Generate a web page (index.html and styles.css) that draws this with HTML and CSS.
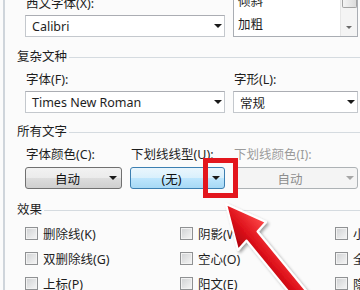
FILE: index.html
```html
<!DOCTYPE html>
<html lang="zh-CN">
<head>
  <meta charset="UTF-8">
  <title>字体</title>
  <link rel="stylesheet" href="styles.css">
</head>
<body>
  <div class="frame">
    <div class="section grid2 top">
      <div class="col">
        <div class="label">西文字体(X):</div>
        <div class="combo"><span>Calibri</span><span class="caret"></span></div>
      </div>
      <div class="listbox">
        <div class="list-items">
          <div class="list-item">倾斜</div>
          <div class="list-item">加粗</div>
        </div>
        <div class="scrollbar">
          <div class="scroll-thumb"></div>
          <div class="scroll-down"><span class="caret small"></span></div>
        </div>
      </div>
    </div>

    <div class="group-title g1"><span>复杂文种</span></div>
    <div class="section grid2 gap-label">
      <div class="col">
        <div class="label">字体(F):</div>
        <div class="combo"><span>Times New Roman</span><span class="caret"></span></div>
      </div>
      <div class="col">
        <div class="label">字形(L):</div>
        <div class="combo"><span>常规</span><span class="caret"></span></div>
      </div>
    </div>

    <div class="group-title g2"><span>所有文字</span></div>
    <div class="section grid3 gap-label">
      <div class="col">
        <div class="label">字体颜色(C):</div>
        <div class="btn"><span class="btn-text">自动</span><span class="caret"></span></div>
      </div>
      <div class="col">
        <div class="label">下划线线型(U):</div>
        <div class="btn hot"><span class="btn-text">(无)</span><span class="caret"></span></div>
      </div>
      <div class="col">
        <div class="label disabled">下划线颜色(I):</div>
        <div class="btn off"><span class="btn-text">自动</span><span class="caret grey"></span></div>
      </div>
    </div>

    <div class="group-title g3"><span>效果</span></div>
    <div class="section checks">
      <label class="check"><span class="box"></span>删除线(K)</label>
      <label class="check"><span class="box"></span>阴影(W)</label>
      <label class="check"><span class="box"></span>小型大写字母(M)</label>
      <label class="check"><span class="box"></span>双删除线(G)</label>
      <label class="check"><span class="box"></span>空心(O)</label>
      <label class="check"><span class="box"></span>全部大写字母(A)</label>
      <label class="check"><span class="box"></span>上标(P)</label>
      <label class="check"><span class="box"></span>阳文(E)</label>
      <label class="check"><span class="box"></span>隐藏(H)</label>
    </div>
  </div>

  <!-- annotation drawn over the dialog -->
  <div class="mark"></div>
  <svg class="pointer" width="360" height="290" viewBox="0 0 360 290">
    <defs>
      <linearGradient id="red" gradientUnits="userSpaceOnUse" x1="237" y1="249" x2="267" y2="223">
        <stop offset="0" stop-color="#a8000a"/>
        <stop offset="0.45" stop-color="#de121b"/>
        <stop offset="1" stop-color="#ff4b4b"/>
      </linearGradient>
      <filter id="shade" x="-20%" y="-20%" width="140%" height="140%">
        <feDropShadow dx="2" dy="2" stdDeviation="1.5" flood-color="#000" flood-opacity="0.35"/>
      </filter>
    </defs>
    <polygon points="226,204 266,222 257.5,231.5 308,293 297,302 246.5,240.5 238,250"
             fill="url(#red)" stroke="#fff" stroke-width="2" stroke-linejoin="round" filter="url(#shade)"/>
  </svg>
</body>
</html>
```

FILE: styles.css
```css
* {
  box-sizing: border-box;
}
html, body {
  margin: 0;
}
body {
  position: relative;
  width: 360px;
  height: 290px;
  overflow: hidden;
  background: #fbfbfb;
  font-family: "Noto Sans", "Noto Sans CJK SC", sans-serif;
  font-size: 12.5px;
  color: #1e1e1e;
}
.frame {
  height: 290px;
  margin-left: 3px;
  border-left: 2px solid #cfd5db;
  padding-left: 12px;
  overflow: hidden;
}
.section {
  margin-left: 8px;
}
.top {
  margin-top: -4px;
}
.grid2 {
  display: grid;
  grid-template-columns: 200px 125px;
  column-gap: 8px;
}
.grid3 {
  display: grid;
  grid-template-columns: 97px 95px 125px;
  column-gap: 8px;
}
.gap-label {
  margin-top: 7px;
}
.label {
  height: 16px;
  line-height: 16px;
  padding-left: 1px;
  white-space: nowrap;
}
.label.disabled {
  color: #9b9b9b;
}

/* combo boxes */
.combo {
  margin-top: 3px;
  height: 22px;
  display: flex;
  align-items: center;
  justify-content: space-between;
  padding: 0 2px 0 6px;
  background: #fff;
  border: 1px solid #c4c8cd;
  border-top-color: #abadb3;
  white-space: nowrap;
}
.caret {
  width: 0;
  height: 0;
  border-left: 4px solid transparent;
  border-right: 4px solid transparent;
  border-top: 4px solid #1a1a1a;
}
.caret.small {
  border-left-width: 3px;
  border-right-width: 3px;
  border-top: 3px solid #6a6a6a;
}
.caret.grey {
  border-top-color: #a6a6a6;
}

/* style list */
.listbox {
  height: 41px;
  display: flex;
  overflow: hidden;
  background: #fff;
  border: 1px solid #a9adb3;
}
.list-items {
  flex: 1;
  margin-top: -7px;
  padding-left: 4px;
}
.list-item {
  height: 23px;
  line-height: 23px;
}
.scrollbar {
  width: 17px;
  display: flex;
  flex-direction: column;
  align-items: center;
  background: #f4f4f4;
  border-left: 1px solid #e6e6e6;
}
.scroll-thumb {
  width: 15px;
  height: 11px;
  border: 1px solid #a3a3a3;
  border-top: none;
  border-radius: 0 0 2px 2px;
  background: linear-gradient(90deg, #f4f4f4, #dcdcdc);
}
.scroll-down {
  margin-top: auto;
  height: 17px;
  display: flex;
  align-items: center;
  justify-content: center;
}

/* group headings */
.group-title {
  display: flex;
  align-items: center;
  height: 16px;
  line-height: 16px;
  white-space: nowrap;
}
.group-title::after {
  content: "";
  flex: 1;
  height: 1px;
  margin-left: 2px;
  background: #d5dbe0;
}
.g1 {
  margin-top: 12px;
}
.g2 {
  margin-top: 11px;
}
.g3 {
  margin-top: 13px;
}

/* buttons */
.btn {
  margin-top: 4px;
  height: 22px;
  display: flex;
  align-items: center;
  padding-right: 4px;
  border: 1px solid #707070;
  border-radius: 3px;
  background: linear-gradient(#f2f2f2 0%, #ebebeb 50%, #dddddd 50%, #cfcfcf 100%);
  color: #111;
  white-space: nowrap;
}
.btn-text {
  flex: 1;
  text-align: center;
}
.btn.hot {
  border-color: #3c7fb1;
  background: linear-gradient(#eaf6fd 0%, #d9f0fc 50%, #bee6fd 50%, #a7d9f5 100%);
}
.btn.off {
  border-color: #adb2b5;
  background: #f4f4f4;
  color: #8d8d8d;
  padding-right: 3px;
}

/* effects checkboxes */
.checks {
  margin-top: 3px;
  display: grid;
  grid-template-columns: 155px 155px 155px;
  grid-auto-rows: 25px;
}
.check {
  display: flex;
  align-items: center;
  gap: 5px;
  white-space: nowrap;
}
.box {
  width: 13px;
  height: 13px;
  flex: none;
  border: 1px solid #8f9193;
  background: linear-gradient(135deg, #cfd1d3, #f6f6f6);
  box-shadow: inset 0 0 0 1px #f2f2f2;
}

/* red annotation */
.mark {
  position: absolute;
  left: 203px;
  top: 158px;
  width: 35px;
  height: 40px;
  border: 5px solid #e3161d;
}
.pointer {
  position: absolute;
  left: 0;
  top: 0;
  pointer-events: none;
}
```
